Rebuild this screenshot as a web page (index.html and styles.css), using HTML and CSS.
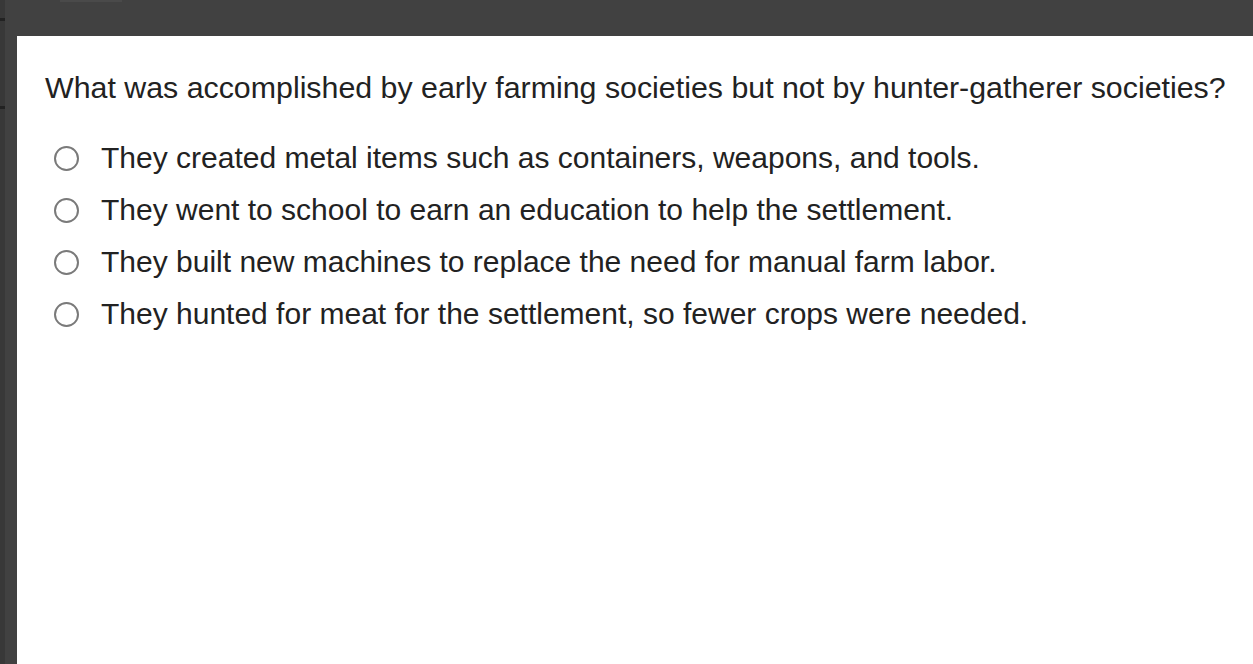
FILE: index.html
```html
<!DOCTYPE html>
<html>
<head>
<meta charset="utf-8">
<link rel="stylesheet" href="styles.css">
</head>
<body>
<div class="frame">
  <div class="edge">
    <span class="mark mark-top"></span>
    <span class="mark mark-bottom"></span>
  </div>
  <div class="main">
    <div class="topbar"><span class="tab"></span></div>
    <div class="panel">
      <p class="question">What was accomplished by early farming societies but not by hunter-gatherer societies?</p>
      <ul class="options">
        <li class="option"><span class="radio"></span><span class="label">They created metal items such as containers, weapons, and tools.</span></li>
        <li class="option"><span class="radio"></span><span class="label">They went to school to earn an education to help the settlement.</span></li>
        <li class="option"><span class="radio"></span><span class="label">They built new machines to replace the need for manual farm labor.</span></li>
        <li class="option"><span class="radio"></span><span class="label">They hunted for meat for the settlement, so fewer crops were needed.</span></li>
      </ul>
    </div>
  </div>
</div>
</body>
</html>
```

FILE: styles.css
```css
html, body {
  margin: 0;
  padding: 0;
  height: 100%;
  background: #414141;
  overflow: hidden;
}

.frame {
  display: flex;
  height: 664px;
}

.edge {
  width: 5px;
  background: #383838;
  position: relative;
  flex: none;
}

.mark {
  position: absolute;
  left: 0;
  width: 5px;
  height: 3px;
  background: #222;
}

.mark-top { top: 18px; }
.mark-bottom { top: 106px; }

.main {
  flex: 1;
  display: flex;
  flex-direction: column;
  padding-left: 12px;
}

.topbar {
  height: 36px;
  flex: none;
  position: relative;
}

.tab {
  position: absolute;
  left: 43px;
  top: 0;
  width: 62px;
  height: 2px;
  background: #4a4a4a;
}

.panel {
  flex: 1;
  background: #ffffff;
  padding: 34px 0 0 28px;
  font-family: "Liberation Sans", Arial, sans-serif;
  color: #222222;
}

.question {
  margin: 0;
  font-size: 30.35px;
  line-height: 36px;
  white-space: nowrap;
}

.options {
  list-style: none;
  margin: 26px 0 0 0;
  padding: 0;
}

.option {
  display: flex;
  align-items: center;
  height: 52px;
  font-size: 30px;
}

.radio {
  width: 21px;
  height: 21px;
  border: 2px solid #7a7a7a;
  border-radius: 50%;
  margin-left: 9px;
  margin-right: 22px;
  flex: none;
  box-sizing: content-box;
}

.label {
  white-space: nowrap;
}
```
